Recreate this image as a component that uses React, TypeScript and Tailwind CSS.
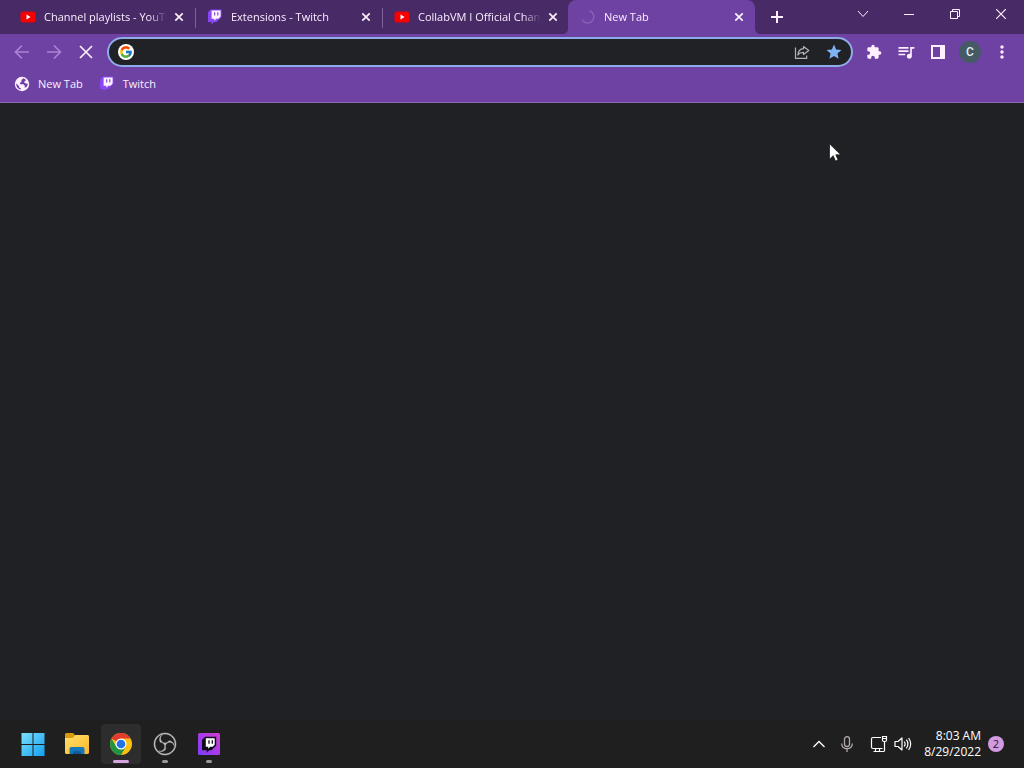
import type { ReactNode } from "react";
import { FcGoogle } from "react-icons/fc";
import { MdExtension, MdMoreVert, MdQueueMusic, MdStar } from "react-icons/md";
import { SiObsstudio } from "react-icons/si";

function YouTubeIcon() {
  return (
    <svg viewBox="0 0 16 16" className="size-4" aria-hidden="true">
      <rect x="0.5" y="2.5" width="15" height="11" rx="2.5" fill="#f60000" />
      <path d="M6.5 5.6 10.6 8l-4.1 2.4z" fill="#fff" />
    </svg>
  );
}

function TwitchIcon() {
  return (
    <svg viewBox="0 0 16 16" className="size-4" aria-hidden="true">
      <path d="M3.8 0.5 1 3.3v9.6h3.4v2.8l2.8-2.8h2.3L14.5 8V0.5z" fill="#8a45f5" />
      <path d="M4.6 1.5h9v6.1l-2.1 2.1H9.3l-2 2v-2H4.6z" fill="#fff4ff" />
      <path d="M7.7 3.3v3.2M10.8 3.3v3.2" stroke="#7a3fd5" strokeWidth="1.1" />
    </svg>
  );
}

function SpinnerIcon() {
  return (
    <svg viewBox="0 0 16 16" className="size-4" fill="none" aria-hidden="true">
      <path d="M10 2a6.2 6.2 0 1 1-7.500 9.200" stroke="#865fb5" strokeWidth="1.6" strokeLinecap="round" />
    </svg>
  );
}

function GlobeIcon() {
  return (
    <svg viewBox="0 0 16 16" className="size-4" aria-hidden="true">
      <circle cx="8" cy="8" r="7.2" fill="#fff0ff" />
      <path
        d="M9.2 2.3 7.4 4.2v1.7L5.6 7l.8 1.2h3l1.5 1.6-.4 1.6 1.7-.2c1-1 1.6-2.1 1.6-3.4l-2.1-.3-1.500-1.100.5-1.500 1.500-.6C11.300 3.300 10.400 2.600 9.200 2.300z"
        fill="#6b40a0"
      />
      <path d="M2.200 7.600 5.100 10.300v1.300l1.600.6v1.500C4.200 13.200 2 11 2.200 7.600z" fill="#6b40a0" />
    </svg>
  );
}

function CloseIcon() {
  return (
    <svg viewBox="0 0 16 16" className="size-4" aria-hidden="true">
      <path d="m4.300 4.300 7.400 7.400m0-7.400-7.400 7.400" stroke="#fff0ff" strokeWidth="1.700" />
    </svg>
  );
}

type TabProps = { title: string; icon: ReactNode; active?: boolean; divider?: boolean };

function Tab({ title, icon, active, divider }: TabProps) {
  return (
    <div
      className={
        active
          ? "relative -ml-px flex h-[34px] w-[187px] items-center rounded-t-lg bg-[#6e42a3] pl-3 pr-2"
          : "relative flex h-[34px] w-[187px] items-center pl-3 pr-2"
      }
    >
      <button className="flex min-w-0 flex-1 items-center gap-2 text-left">
        <span className="shrink-0">{icon}</span>
        <span className="flex-1 overflow-hidden whitespace-nowrap mask-r-from-85% mask-r-to-100%">{title}</span>
      </button>
      <button aria-label={`Close ${title}`} className="ml-1 shrink-0">
        <CloseIcon />
      </button>
      {divider && <span className="absolute -right-px top-2 h-5 w-px bg-[#7c6296]" />}
      {active && (
        <>
          <svg viewBox="0 0 6 6" className="absolute -left-1.5 bottom-0 size-1.5" aria-hidden="true">
            <path d="M6 0v6H0Q6 6 6 0z" fill="#6e42a3" />
          </svg>
          <svg viewBox="0 0 6 6" className="absolute -right-1.5 bottom-0 size-1.5" aria-hidden="true">
            <path d="M0 0v6h6Q0 6 0 0z" fill="#6e42a3" />
          </svg>
        </>
      )}
    </div>
  );
}

function TitleBar() {
  return (
    <header className="flex h-[34px] items-start bg-[#472a66] pl-2">
      <nav aria-label="Tabs" className="flex">
        <Tab title="Channel playlists - YouTube" icon={<YouTubeIcon />} divider />
        <Tab title="Extensions - Twitch" icon={<TwitchIcon />} divider />
        <Tab title="CollabVM I Official Channel" icon={<YouTubeIcon />} />
        <Tab title="New Tab" icon={<SpinnerIcon />} active />
      </nav>
      <button aria-label="Open new tab" className="flex h-[34px] w-11 items-center justify-center">
        <svg viewBox="0 0 14 14" className="size-3.5">
          <path d="M7 1v12M1 7h12" stroke="#fff0ff" strokeWidth="2" />
        </svg>
      </button>
      <div className="ml-auto flex h-7">
        <button aria-label="Search tabs" className="flex w-[46px] items-center justify-center">
          <svg viewBox="0 0 12 12" className="size-3" fill="none">
            <path d="m1 3 5 5.500L11 3" stroke="#fff0ff" />
          </svg>
        </button>
        <button aria-label="Minimize" className="flex w-[46px] items-center justify-center">
          <svg viewBox="0 0 10 10" className="size-2.5">
            <path d="M0 5.500h10" stroke="#fff0ff" />
          </svg>
        </button>
        <button aria-label="Restore" className="flex w-[46px] items-center justify-center">
          <svg viewBox="0 0 10 10" className="size-2.5" fill="none">
            <path d="M.5 2.500h7v7h-7zM2.500 2.500v-2h7v7h-2" stroke="#fff0ff" />
          </svg>
        </button>
        <button aria-label="Close window" className="flex w-[46px] items-center justify-center">
          <svg viewBox="0 0 10 10" className="size-2.5">
            <path d="m0 0 10 10M10 0 0 10" stroke="#fff0ff" strokeWidth="1.200" />
          </svg>
        </button>
      </div>
    </header>
  );
}

const toolButton = "flex h-8 w-8 shrink-0 items-center justify-center text-[#fff0ff]";

function Toolbar() {
  return (
    <div className="flex h-9 items-center bg-[#6e42a3] px-1.5">
      <button aria-label="Back" className={toolButton}>
        <svg viewBox="0 0 16 16" className="size-4" fill="none" stroke="#ab82d2" strokeWidth="1.700">
          <path d="M15 8H2M8 1.500 1.500 8 8 14.500" />
        </svg>
      </button>
      <button aria-label="Forward" className={toolButton}>
        <svg viewBox="0 0 16 16" className="size-4" fill="none" stroke="#ab82d2" strokeWidth="1.700">
          <path d="M1 8h13M8 1.500 14.500 8 8 14.500" />
        </svg>
      </button>
      <button aria-label="Stop loading" className={toolButton}>
        <svg viewBox="0 0 16 16" className="size-4" stroke="#fff0ff" strokeWidth="1.700">
          <path d="m2 2 12 12M14 2 2 14" />
        </svg>
      </button>
      <div className="mx-[5px] flex h-[30px] min-w-0 flex-1 items-center rounded-full border-2 border-[#8fabea] bg-[#202225] px-[9px]">
        <span className="flex size-4 shrink-0 items-center justify-center rounded-full bg-white">
          <FcGoogle className="size-3.5" />
        </span>
        <input
          aria-label="Search or type a URL"
          className="h-6 min-w-0 flex-1 bg-transparent px-2 text-xs text-white outline-none"
        />
        <button aria-label="Share this page" className="mr-4 flex w-4 items-center justify-center">
          <svg viewBox="0 0 16 16" className="size-4" fill="none" stroke="#aeb2ba" strokeWidth="1.200">
            <path d="M1.500 3.500v10.900h11.200V11.500" />
            <path d="M9.500 2.500 14.800 6.500 9.500 10.500V8.400C7 8.300 5.300 9 3.900 11 4.100 7.500 6.100 5 9.500 4.700z" strokeLinejoin="round" />
          </svg>
        </button>
        <button aria-label="Bookmark this tab" className="flex w-4 items-center justify-center text-[#7fb5f5]">
          <MdStar className="size-[18px] shrink-0" />
        </button>
      </div>
      <button aria-label="Extensions" className={toolButton}>
        <MdExtension className="size-4" />
      </button>
      <button aria-label="Media controls" className={toolButton}>
        <MdQueueMusic className="size-5" />
      </button>
      <button aria-label="Side panel" className={toolButton}>
        <svg viewBox="0 0 14 14" className="size-3.5">
          <path d="M0 0h14v14H0zM2 2v10h7V2z" fill="#fff0ff" fillRule="evenodd" />
        </svg>
      </button>
      <button aria-label="Profile" className={toolButton}>
        <span className="flex size-[22px] items-center justify-center rounded-full bg-[#455a64] font-[Roboto,sans-serif] text-xs text-[#e4eef2]">
          C
        </span>
      </button>
      <button aria-label="Menu" className={toolButton}>
        <MdMoreVert className="size-5" />
      </button>
    </div>
  );
}

function BookmarksBar() {
  return (
    <nav
      aria-label="Bookmarks"
      className="flex h-[33px] items-start gap-4 border-b border-[#8f6ab5] bg-[#6e42a3] pl-3.5 pt-1.5"
    >
      <a href="#new-tab" className="flex items-center gap-2">
        <GlobeIcon />
        New Tab
      </a>
      <a href="#twitch" className="flex items-center gap-2">
        <TwitchIcon />
        Twitch
      </a>
    </nav>
  );
}

function WindowsLogo() {
  return (
    <svg viewBox="0 0 24 24" className="size-6" aria-hidden="true">
      <defs>
        <linearGradient id="start" x1="0" y1="0" x2="1" y2="1">
          <stop offset="0" stopColor="#7be0fd" />
          <stop offset="1" stopColor="#139ff0" />
        </linearGradient>
      </defs>
      <path d="M.5 1h11v11H.5zM12.500 1h11v11h-11zM.5 13h11v11H.5zM12.500 13h11v11h-11z" fill="url(#start)" />
    </svg>
  );
}

function FolderIcon() {
  return (
    <svg viewBox="0 0 26 24" className="h-6 w-[26px]" aria-hidden="true">
      <defs>
        <linearGradient id="folder" x1="0" y1="0" x2="1" y2="1">
          <stop offset="0" stopColor="#ffe06a" />
          <stop offset="1" stopColor="#fbb82c" />
        </linearGradient>
      </defs>
      <path d="M1 2.500C1 1.700 1.700 1 2.500 1H9l2.500 2.500V7H1z" fill="#d99a10" />
      <path d="M1 6h7.500l3-3H23.500c.9 0 1.500.7 1.500 1.500V20.500c0 .9-.7 1.500-1.500 1.500h-21C1.600 22 1 21.400 1 20.500z" fill="url(#folder)" />
      <path d="M5.500 22v-5c0-1.200.8-2 2-2h11c1.200 0 2 .8 2 2v5z" fill="#1678b8" />
      <path d="M9 22v-1.500c0-.8.500-1.300 1.300-1.300h5.400c.8 0 1.300.5 1.300 1.300V22z" fill="#0b5a9c" />
    </svg>
  );
}

function ChromeIcon() {
  return (
    <svg viewBox="0 0 24 24" className="size-6" aria-hidden="true">
      <circle cx="12" cy="12" r="11" fill="#fbc116" />
      <path d="M12 12 2.470 6.500A11 11 0 0 1 21.530 6.500H12z" fill="#e33b2e" />
      <path d="M2.470 6.500A11 11 0 0 0 12 23l4.760-8.250L12 12 7.240 14.750z" fill="#229342" />
      <circle cx="12" cy="12" r="5.500" fill="#fff" />
      <circle cx="12" cy="12" r="4.300" fill="#2372e8" />
    </svg>
  );
}

function TwitchAppIcon() {
  return (
    <svg viewBox="0 0 24 24" className="size-6" aria-hidden="true">
      <defs>
        <linearGradient id="twitch-app" x1="0" y1="1" x2="1" y2="0">
          <stop offset="0" stopColor="#7c3cff" />
          <stop offset="1" stopColor="#d43ccf" />
        </linearGradient>
      </defs>
      <rect x="1" y="1" width="22" height="22" rx="1.500" fill="url(#twitch-app)" />
      <path d="M8.200 4.800h11v8.700l-4.700 4.700h-2.200l-2.600 2.600v-2.600H5V8z" fill="#100b18" />
      <path d="M8.800 6.300h8.900v6.500l-2 2h-2.500l-2 2v-2H8.800z" fill="#fff" />
      <path d="M12 8.300v3.400M15.300 8.300v3.400" stroke="#100b18" strokeWidth="1.300" />
    </svg>
  );
}

type TaskProps = { label: string; icon: ReactNode; state?: "active" | "running" };

function TaskButton({ label, icon, state }: TaskProps) {
  return (
    <button
      aria-label={label}
      className={
        state === "active"
          ? "relative flex size-10 items-center justify-center rounded bg-[#2d2d2d]"
          : "relative flex size-10 items-center justify-center rounded"
      }
    >
      {icon}
      {state === "active" && <span className="absolute bottom-px h-[3px] w-4 rounded-full bg-[#d6a5e0]" />}
      {state === "running" && <span className="absolute bottom-px h-[3px] w-1.5 rounded-full bg-[#9a9a9a]" />}
    </button>
  );
}

function Taskbar() {
  return (
    <footer className="flex h-12 items-center bg-[#1f1f1f] pl-[13px] pr-5">
      <div className="flex gap-1">
        <TaskButton label="Start" icon={<WindowsLogo />} />
        <TaskButton label="File Explorer" icon={<FolderIcon />} />
        <TaskButton label="Google Chrome" icon={<ChromeIcon />} state="active" />
        <TaskButton
          label="OBS Studio"
          icon={<SiObsstudio className="size-[22px] overflow-visible stroke-[#c4c4c4] stroke-[0.5] text-[#c4c4c4]" />}
          state="running"
        />
        <TaskButton label="Twitch" icon={<TwitchAppIcon />} state="running" />
      </div>
      <div className="ml-auto flex items-center">
        <button aria-label="Show hidden icons" className="flex w-7 justify-center">
          <svg viewBox="0 0 14 14" className="size-3.5" fill="none">
            <path d="m1.500 10 5.500-5.500 5.500 5.500" stroke="#fff" strokeWidth="1.300" />
          </svg>
        </button>
        <button aria-label="Microphone" className="flex w-7 justify-center">
          <svg viewBox="0 0 16 16" className="size-4" fill="none" stroke="#b0a8a8" strokeWidth="1.300">
            <rect x="5.500" y="0.700" width="5" height="9.800" rx="2.500" />
            <path d="M2.700 7.500C2.700 11 5 12.700 8 12.700s5.300-1.700 5.300-5.200M8 12.700V16" />
          </svg>
        </button>
        <button aria-label="Network and volume" className="ml-[9px] flex items-center gap-1.5">
          <svg viewBox="0 0 18 18" className="size-[18px]" fill="none" stroke="#fff" strokeWidth="1.200">
            <path d="M11 2.500H3Q1.500 2.500 1.500 4v8Q1.500 13.500 3 13.500h9.500M5.500 13.500v3M9.500 13.500v3M3.500 16.500h10.500M14.500 6.500v10" />
            <path d="M12.500 1.500h4v3.500q0 1.500-1.500 1.500h-1q-1.500 0-1.500-1.500zM12.500 3.500h4" />
          </svg>
          <svg viewBox="0 0 18 18" className="size-[18px]" fill="none" stroke="#fff" strokeWidth="1.200">
            <path d="M1 6.500h3L8 3v12L4 11.500H1zM10.200 6.500q1.800 2.500 0 5M12.400 4.700q3 4.300 0 8.600M14.600 3q4.200 6 0 12" strokeLinejoin="round" />
          </svg>
        </button>
        <button className="ml-3 text-right text-xs leading-4 font-normal text-white">
          <time dateTime="2022-08-29T08:03">
            8:03 AM
            <br />
            8/29/2022
          </time>
        </button>
        <button
          aria-label="2 notifications"
          className="ml-[7px] flex size-4 items-center justify-center rounded-full bg-[#d29be0] text-[11px] leading-4 text-[#2b1233]"
        >
          2
        </button>
      </div>
    </footer>
  );
}

export default function App() {
  return (
    <div className="relative flex min-h-screen flex-col bg-[#202124] font-['Open_Sans','Noto_Sans',sans-serif] text-[11px] leading-4 font-medium text-[#fbeeff]">
      <TitleBar />
      <Toolbar />
      <BookmarksBar />
      <main className="flex-1" />
      <Taskbar />
      <svg viewBox="0 0 12 19" className="absolute left-[829px] top-[143px] h-[19px] w-3" aria-hidden="true">
        <path d="M.5.700v15.500l3.700-3.500 2.300 5.400 2.600-1.100-2.300-5.200h4.900z" fill="#fff" stroke="#111" strokeWidth="0.700" />
      </svg>
    </div>
  );
}
